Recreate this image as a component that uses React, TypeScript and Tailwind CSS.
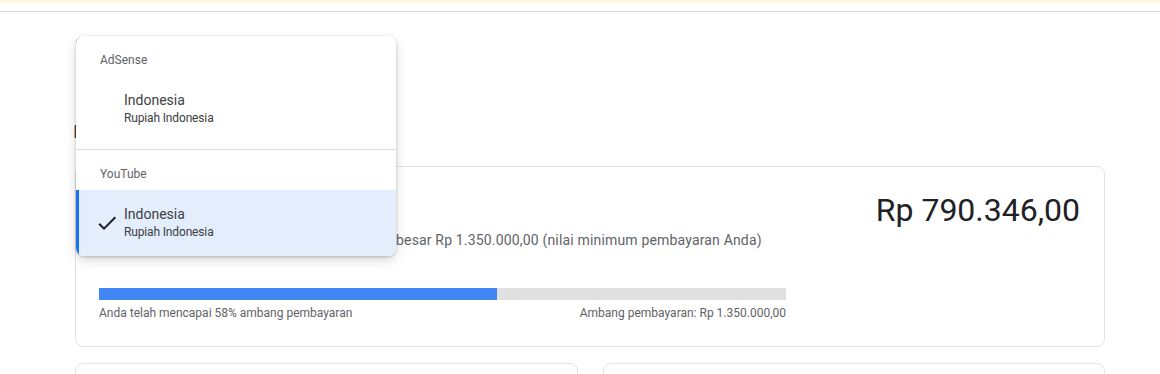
import React from "react";

function CheckIcon() {
  return (
    <svg width="24" height="24" viewBox="0 0 24 24" className="absolute left-[16px] top-[21px]">
      <path d="M9 16.17L4.83 12l-1.42 1.41L9 19 21 7l-1.41-1.41z" fill="#202124" />
    </svg>
  );
}

export default function App() {
  return (
    <div className="relative w-[1160px] h-[374px] overflow-hidden bg-white font-['Roboto','Liberation_Sans',sans-serif]">
      <div className="h-[3px] bg-[#fef7e0]" />
      <div className="h-[9px] border-b border-[#dadce0]" />

      <div className="ml-[75px] w-[1030px]">
        {/* page header (mostly hidden behind the menu) */}
        <div className="h-[154px] pt-[25px]">
          <div className="ml-[1px] h-[40px] w-[220px] rounded-md border border-[#5f6368]" />
          <div className="mt-[43px] -ml-[2px] text-[18px] leading-[24px] text-[#3c4043]">Indonesia</div>
        </div>

        {/* balance card */}
        <div className="rounded-lg border border-[#e3e3e3] px-[23px] pt-[23px] pb-[25px]">
          <div className="flex items-start justify-between">
            <div>
              <div className="h-[40px] text-[22px] leading-[40px] text-[#202124]">Saldo</div>
              <div className="whitespace-nowrap text-[14px] leading-[20px] text-[#5f6368]">
                <span className="inline-block w-[297px] overflow-hidden align-bottom">Anda dibayar saat saldo mencapai ambang se</span>
                <span className="tracking-[0.17px]">besar Rp 1.350.000,00 (nilai minimum pembayaran Anda)</span>
              </div>
            </div>
            <div className="pr-[1px] text-[32px] leading-[40px] text-[#202124]">Rp 790.346,00</div>
          </div>

          <div className="mt-[38px] w-[687px]">
            <div className="flex h-[12px] bg-[#e0e0e0]">
              <div className="h-full bg-[#4285f4]" style={{ width: "58%" }} />
            </div>
            <div className="mt-[5px] flex justify-between text-[12px] leading-[16px] text-[#5f6368]">
              <span>Anda telah mencapai 58% ambang pembayaran</span>
              <span>Ambang pembayaran: Rp 1.350.000,00</span>
            </div>
          </div>
        </div>

        {/* lower cards */}
        <div className="mt-[16px] grid grid-cols-2 gap-[25px]">
          <div className="h-[120px] rounded-lg border border-[#e3e3e3]" />
          <div className="h-[120px] rounded-lg border border-[#e3e3e3]" />
        </div>
      </div>

      {/* dropdown menu */}
      <div className="absolute left-[76px] top-[36px] w-[320px] overflow-hidden rounded-lg bg-white shadow-[0_4px_12px_rgba(0,0,0,0.15),0_1px_3px_rgba(0,0,0,0.2)]">
        <div className="pl-[24px] pt-[16px] pb-[8px] text-[12px] leading-[16px] text-[#5f6368]">AdSense</div>
        <div className="pl-[48px] pt-[14px] pb-[23px]">
          <div className="text-[14px] leading-[20px] text-[#3c4043]">Indonesia</div>
          <div className="text-[12px] leading-[16px] tracking-[-0.15px] text-[#3c4043]">Rupiah Indonesia</div>
        </div>
        <div className="h-px bg-[#dadce0]" />
        <div className="pl-[24px] pt-[16px] pb-[8px] text-[12px] leading-[16px] text-[#5f6368]">YouTube</div>
        <div className="relative border-l-[3px] border-[#1a73e8] bg-[#e3edfc] pl-[45px] pt-[14px] pb-[16px]">
          <CheckIcon />
          <div className="text-[14px] leading-[20px] text-[#3c4043]">Indonesia</div>
          <div className="text-[12px] leading-[16px] tracking-[-0.15px] text-[#3c4043]">Rupiah Indonesia</div>
        </div>
      </div>
    </div>
  );
}
